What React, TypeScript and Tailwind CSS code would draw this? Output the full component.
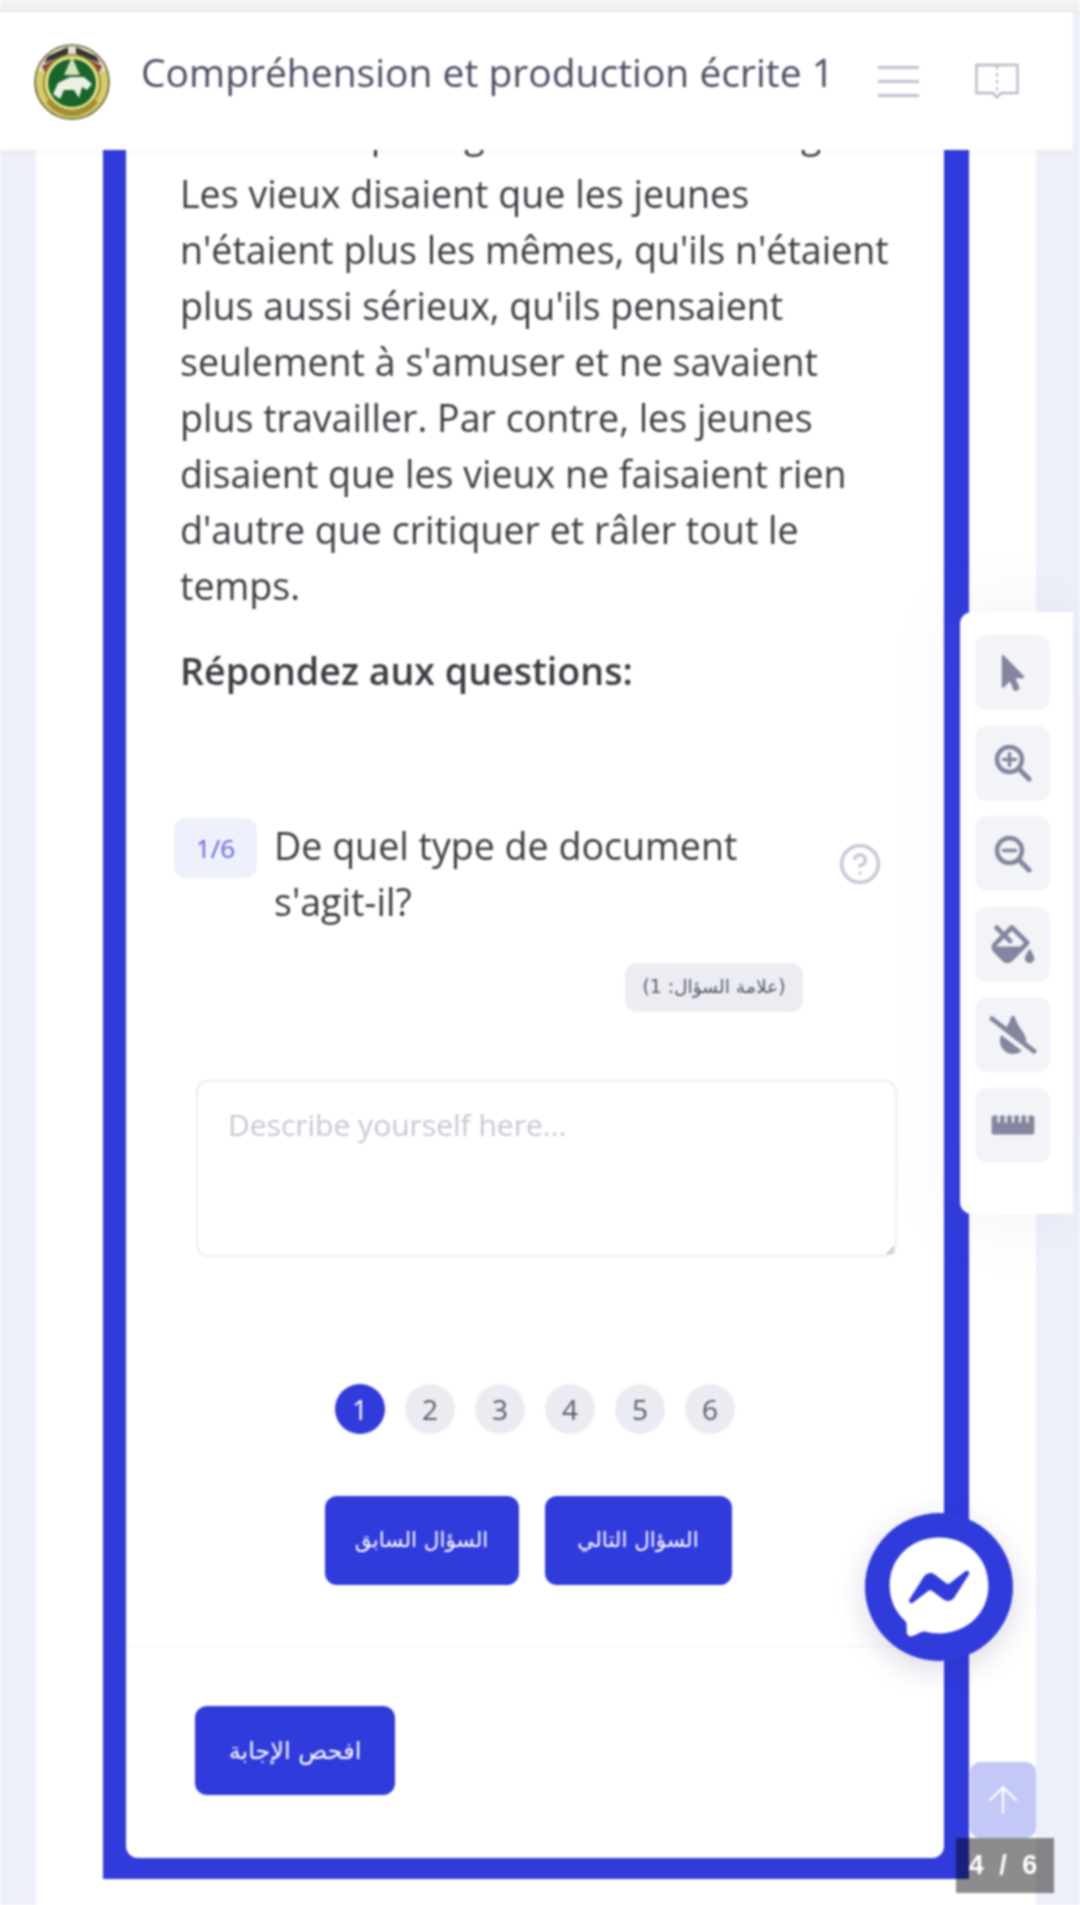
import { ArrowUp, CircleHelp } from "lucide-react";
import {
  FaMousePointer,
  FaFillDrip,
  FaTintSlash,
  FaRulerHorizontal,
  FaFacebookMessenger,
} from "react-icons/fa";

const Logo = () => (
  <svg viewBox="0 0 76 78" className="w-[76px] h-[78px] shrink-0">
    <circle cx="38" cy="40" r="37" fill="#d6cc6c" stroke="#5c5a2c" strokeWidth="1.5" />
    <path d="M4 28 A36 36 0 0 1 72 28 L38 40 Z" fill="#e4dfd2" />
    <path d="M8 24 L30 12 L30 24 L12 33 Z" fill="#8f3f38" />
    <path d="M68 24 L46 12 L46 24 L64 33 Z" fill="#8f3f38" />
    <path d="M14 14 L34 5 L34 12 L10 21 Z" fill="#34342e" />
    <path d="M62 14 L42 5 L42 12 L66 21 Z" fill="#34342e" />
    <circle cx="38" cy="41" r="28" fill="#efe68f" stroke="#8f8a38" strokeWidth="2" />
    <circle cx="38" cy="41" r="24" fill="#17662a" />
    <path d="M38 15 L46 33 L30 33 Z" fill="#d7e2bf" />
    <path d="M19 52 L24 41 L36 35 L50 35 L58 42 L53 48 L48 45 L45 56 L40 48 L30 48 L26 57 Z" fill="#eef0e6" />
    <path d="M12 60 A31 31 0 0 0 64 60 L59 57 A26 26 0 0 1 17 57 Z" fill="#a08f34" />
  </svg>
);

const BookIcon = () => (
  <svg viewBox="0 0 44 36" className="w-[44px] h-[36px]" fill="none" stroke="#b9bbc9" strokeWidth="2.4">
    <path d="M1.5 2 H42.5 V30 H26 L22 34.5 L18 30 H1.5 Z" />
    <path d="M22 3 V29" strokeDasharray="3.5 3.5" strokeWidth="2" />
  </svg>
);

const Zoom = ({ plus }: { plus?: boolean }) => (
  <svg viewBox="0 0 38 38" className="h-[38px] w-[38px]" fill="none" stroke="currentColor" strokeLinecap="round">
    <circle cx="15.5" cy="15.5" r="12.5" strokeWidth="4.5" />
    <path d="M25 25 L35 35" strokeWidth="5" />
    <path d="M9.5 15.5 H21.5" strokeWidth="3.5" />
    {plus && <path d="M15.5 9.5 V21.5" strokeWidth="3.5" />}
  </svg>
);

const tools = [
  <FaMousePointer key="a" className="h-[36px] w-[26px]" />,
  <Zoom key="b" plus />,
  <Zoom key="c" />,
  <FaFillDrip key="d" className="h-[38px] w-[44px]" />,
  <FaTintSlash key="e" className="h-[38px] w-[48px]" />,
  <FaRulerHorizontal key="f" className="h-[38px] w-[44px]" />,
];

const arabic = { fontFamily: '"DejaVu Sans", "Noto Sans", sans-serif' };

export default function App() {
  return (
    <div
      className="relative h-[1905px] w-[1080px] overflow-hidden bg-[#eef0f9] pl-[36px] pr-[44px] text-[#3b3c42] blur-[0.8px]"
      style={{ fontFamily: '"Open Sans", "Noto Sans", sans-serif' }}
    >
      <main className="h-full bg-white px-[67px]">
        <section className="border-l-[23px] border-r-[25px] border-b-[21px] border-[#303bdc] bg-[#303bdc]">
          <div className="rounded-b-[12px] bg-white pt-[106px] pb-[63px]">
            <div className="pl-[54px] pr-[48px] text-[37.6px] leading-[56px]">
              <span className="mb-[4px] block whitespace-nowrap">Ceux-ci ne partageaient les mêmes goûts.</span>
              <p>
                Les vieux disaient que les jeunes n'étaient plus les mêmes, qu'ils n'étaient plus aussi sérieux, qu'ils
                pensaient seulement à s'amuser et ne savaient plus travailler. Par contre, les jeunes disaient que les
                vieux ne faisaient rien d'autre que critiquer et râler tout le temps.
              </p>
            </div>
            <h2 className="mt-[29px] pl-[54px] text-[37.6px] font-semibold leading-[56px]">Répondez aux questions:</h2>

            <div className="mt-[119px] flex items-start pl-[48px]">
              <span className="flex h-[60px] w-[83px] shrink-0 items-center justify-center rounded-[12px] bg-[#eef0fb] text-[26px] text-[#5f68e0]">
                1/6
              </span>
              <p className="ml-[17px] w-[540px] text-[37.6px] leading-[56px]">De quel type de document s'agit-il?</p>
              <CircleHelp className="ml-[24px] mt-[24px] h-[44px] w-[44px] text-[#c4c6d4]" strokeWidth={1.8} />
            </div>

            <div className="mr-[141px] mt-[33px] flex justify-end">
              <span
                dir="rtl"
                className="flex h-[49px] w-[178px] items-center justify-center rounded-[12px] bg-[#ecedf3] text-[18.7px] text-[#55586a]"
                style={arabic}
              >
                (علامة السؤال: 1)
              </span>
            </div>

            <textarea
              readOnly
              placeholder="Describe yourself here..."
              className="ml-[70px] mt-[68px] block h-[177px] w-[701px] rounded-[12px] border-2 border-[#ecedf4] bg-white px-[30px] py-[21px] text-[30px] leading-[44px] outline-none placeholder:text-[#c6c7d3]"
            />

            <div className="mt-[127px] flex justify-center gap-[20px]">
              {[1, 2, 3, 4, 5, 6].map((n) => (
                <span
                  key={n}
                  className={
                    n === 1
                      ? "flex h-[50px] w-[50px] items-center justify-center rounded-full bg-[#303bdc] text-[28px] text-white"
                      : "flex h-[50px] w-[50px] items-center justify-center rounded-full bg-[#ebecf2] text-[28px] text-[#55586a]"
                  }
                >
                  {n}
                </span>
              ))}
            </div>

            <div className="mt-[62px] flex justify-center gap-[26px] pr-[14px]">
              <button
                dir="rtl"
                className="h-[89px] w-[194px] rounded-[12px] bg-[#303bdc] text-[21.5px] text-white"
                style={arabic}
              >
                السؤال السابق
              </button>
              <button
                dir="rtl"
                className="h-[89px] w-[187px] rounded-[12px] bg-[#303bdc] text-[21.5px] text-white"
                style={arabic}
              >
                السؤال التالي
              </button>
            </div>

            <hr className="mt-[60px] border-t-2 border-[#f7f7fa]" />

            <button
              dir="rtl"
              className="ml-[69px] mt-[59px] block h-[89px] w-[200px] rounded-[12px] bg-[#303bdc] text-[24px] text-white"
              style={arabic}
            >
              افحص الإجابة
            </button>
          </div>
        </section>
      </main>

      {/* top chrome */}
      <div className="absolute left-0 top-0 h-[12px] w-full border-b border-[#e2e5e5] bg-[#f0f2f2]" />
      <header className="absolute left-0 top-[12px] flex h-[138px] w-[1073px] items-center bg-white pl-[34px] shadow-[0_2px_6px_rgba(40,40,80,0.04)]">
        <Logo />
        <h1 className="-mt-[18px] ml-[31px] whitespace-nowrap text-[39px] leading-[56px] text-[#4a4e63]">
          Compréhension et production écrite 1
        </h1>
        <div className="ml-[44px] flex flex-col gap-[11px]">
          <span className="block h-[3px] w-[41px] bg-[#bfc1cd]" />
          <span className="block h-[3px] w-[41px] bg-[#bfc1cd]" />
          <span className="block h-[3px] w-[41px] bg-[#bfc1cd]" />
        </div>
        <div className="ml-[56px]">
          <BookIcon />
        </div>
      </header>

      {/* floating tool panel */}
      <aside className="absolute left-[960px] top-[612px] flex h-[602px] w-[113px] flex-col gap-[15.6px] rounded-l-[12px] bg-white pl-[15px] pt-[23px] shadow-[0_0_70px_rgba(120,120,190,0.12)]">
        {tools.map((icon, i) => (
          <button
            key={i}
            className="flex h-[75px] w-[75px] items-center justify-center rounded-[12px] bg-[#f2f4f8] text-[#84869f]"
          >
            {icon}
          </button>
        ))}
      </aside>

      {/* messenger bubble */}
      <div className="absolute left-[865px] top-[1513px] flex h-[148px] w-[148px] items-center justify-center rounded-full bg-[#303bdc] shadow-[0_8px_30px_rgba(40,40,100,0.18)]">
        <FaFacebookMessenger className="h-[102px] w-[102px] text-white" />
      </div>

      {/* scroll to top */}
      <div className="absolute left-[970px] top-[1762px] flex h-[76px] w-[66px] items-center justify-center rounded-[10px] bg-[#c3c8f6]">
        <ArrowUp className="h-[44px] w-[44px] text-white" strokeWidth={1.2} />
      </div>

      {/* slide counter */}
      <div
        className="absolute left-[956px] top-[1838px] flex h-[55px] w-[98px] items-center justify-center bg-black/45 text-[27px] font-bold tracking-[4px] text-white"
        style={{ fontFamily: '"Liberation Sans", Arial, sans-serif' }}
      >
        4 / 6
      </div>
    </div>
  );
}
